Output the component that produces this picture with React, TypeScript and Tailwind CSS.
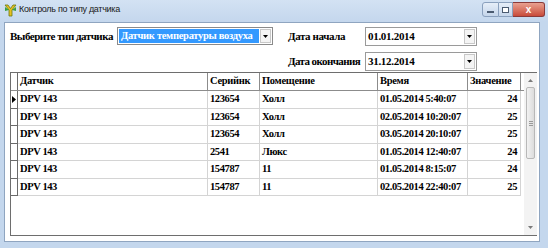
import React from "react";

const serif = { fontFamily: '"Liberation Serif", "Times New Roman", serif' };

const cols = [
  { title: "Датчик", w: "w-[190px]", align: "text-left" },
  { title: "Серийнк", w: "w-[52px]", align: "text-left" },
  { title: "Помещение", w: "w-[118px]", align: "text-left" },
  { title: "Время", w: "w-[90px]", align: "text-left" },
  { title: "Значение", w: "w-[53px]", align: "text-right" },
];

const rows = [
  ["DPV 143", "123654", "Холл", "01.05.2014 5:40:07", "24"],
  ["DPV 143", "123654", "Холл", "02.05.2014 10:20:07", "25"],
  ["DPV 143", "123654", "Холл", "03.05.2014 20:10:07", "25"],
  ["DPV 143", "2541", "Люкс", "01.05.2014 12:40:07", "24"],
  ["DPV 143", "154787", "11", "01.05.2014 8:15:07", "24"],
  ["DPV 143", "154787", "11", "02.05.2014 22:40:07", "25"],
];

function DropArrow() {
  return (
    <svg width="5" height="3" viewBox="0 0 5 3">
      <path d="M0 0H5L2.5 3Z" fill="#000" />
    </svg>
  );
}

function DateBox({ value }: { value: string }) {
  return (
    <div className="flex h-[19px] w-[112px] items-center border border-[#9a9a9a] bg-white">
      <span className="flex-1 whitespace-nowrap pl-[2px] text-[11px] font-bold leading-none tracking-[-0.3px] text-black">{value}</span>
      <div className="mr-[1px] flex h-[15px] w-[11px] items-center justify-center border border-[#c8c8c8] bg-[#f4f4f4]">
        <DropArrow />
      </div>
    </div>
  );
}

export default function App() {
  return (
    <div className="h-[248px] w-[548px] overflow-hidden bg-[#c4d7ed]" style={serif}>
      {/* title bar */}
      <div className="flex h-[22px] items-start bg-gradient-to-b from-[#d3e2f3] to-[#c4d7ed]">
        <svg className="ml-[4px] mt-[4px]" width="13" height="13" viewBox="0 0 13 13">
          <path d="M1 1L5 6V12H8V6L12 1H9L6.5 4.5L4 1Z" fill="#e8c020" stroke="#6a7a10" strokeWidth="0.8" />
          <path d="M5 6L1 3V7Z" fill="#3aa040" />
          <path d="M8 6L12 3V7Z" fill="#3aa040" />
        </svg>
        <span
          className="ml-[2px] mt-[5px] whitespace-nowrap text-[9px] leading-none tracking-[-0.3px] text-[#1a1a1a]"
          style={{ fontFamily: '"Liberation Sans", Arial, sans-serif' }}
        >
          Контроль по типу датчика
        </span>
        <div className="ml-auto mr-[3px] mt-[2px] flex">
          <div className="flex h-[15px] w-[17px] items-center justify-center rounded-l-[3px] border border-[#8aa0bd] bg-gradient-to-b from-[#e6eef8] to-[#c5d5ea]">
            <div className="mt-[5px] h-[2px] w-[7px] border border-[#4a5a70] bg-white" />
          </div>
          <div className="flex h-[15px] w-[14px] items-center justify-center border-y border-r border-[#8aa0bd] bg-gradient-to-b from-[#e6eef8] to-[#c5d5ea]">
            <div className="h-[6px] w-[7px] border border-[#4a5a70] bg-white" />
          </div>
          <div className="flex h-[15px] w-[32px] items-center justify-center rounded-r-[3px] border-y border-r border-[#8a3a3a] bg-gradient-to-b from-[#e8a090] to-[#c84a3a]">
            <span className="text-[10px] font-bold leading-none text-white" style={{ fontFamily: '"Liberation Sans", Arial, sans-serif' }}>
              x
            </span>
          </div>
        </div>
      </div>

      {/* client */}
      <div className="ml-[4px] flex h-[220px] w-[536px] flex-col border border-[#8fa5c0] bg-white">
        <div className="flex pt-[4px]">
          <div className="ml-[5px] flex h-[19px] w-[107px] items-center">
            <span className="whitespace-nowrap text-[11px] font-bold leading-none tracking-[-0.5px]">Выберите тип датчика</span>
          </div>
          <div className="flex h-[18px] w-[156px] items-center border border-[#8a8a8a] bg-white">
            <span className="ml-[1px] flex h-[14px] w-[140px] items-center whitespace-nowrap bg-[#3399ff] pl-[2px] text-[10.5px] font-bold leading-none tracking-[-0.3px] text-white">
              Датчик температуры воздуха
            </span>
            <div className="ml-auto mr-[1px] flex h-[14px] w-[11px] items-center justify-center border border-[#c8c8c8] bg-[#f4f4f4]">
              <DropArrow />
            </div>
          </div>
          <div className="ml-[15px] grid grid-cols-[77px_112px] gap-y-[6px]">
            <div className="flex items-center whitespace-nowrap text-[11px] font-bold leading-none tracking-[-0.4px]">Дата начала</div>
            <DateBox value="01.01.2014" />
            <div className="flex items-center whitespace-nowrap text-[11px] font-bold leading-none tracking-[-0.6px]">Дата окончания</div>
            <DateBox value="31.12.2014" />
          </div>
        </div>

        {/* grid */}
        <div className="ml-[5px] mt-[1px] flex h-[164px] w-[527px] border border-r-0 border-[#6e6e6e]">
          <div className="flex-1">
            <div className="flex h-[18px] border-b border-[#8c8c8c]">
              <div className="w-[7px] border-r border-[#6a6a6a]" />
              {cols.map((c) => (
                <div
                  key={c.title}
                  className={`${c.w} flex items-center whitespace-nowrap border-r border-[#8c8c8c] px-[2px] text-[10.5px] font-bold leading-none tracking-[-0.3px]`}
                >
                  {c.title}
                </div>
              ))}
            </div>
            {rows.map((r, i) => (
              <div key={i} className="flex h-[17.5px]">
                <div className="flex w-[7px] items-center border-b border-r border-[#6a6a6a]">
                  {i === 0 && (
                    <svg width="4" height="7" viewBox="0 0 4 7" className="ml-[1px]">
                      <path d="M0 0L4 3.5L0 7Z" fill="#000" />
                    </svg>
                  )}
                </div>
                {r.map((v, j) => (
                  <div
                    key={j}
                    className={`${cols[j].w} ${cols[j].align} flex items-center whitespace-nowrap border-b border-r border-[#d4d4d4] ${
                      j === 4 ? "justify-end pr-[3px]" : "pl-[2px]"
                    } text-[10.5px] font-bold leading-none tracking-[-0.4px]`}
                  >
                    {v}
                  </div>
                ))}
              </div>
            ))}
          </div>
          {/* scrollbar */}
          <div className="flex w-[13px] flex-col items-center bg-[#f3f3f3]">
            <svg width="5" height="3" viewBox="0 0 5 3" className="mt-[6px]">
              <path d="M0 3H5L2.5 0Z" fill="#7a7a7a" />
            </svg>
            <div className="mt-[5px] flex h-[72px] w-[9px] items-center justify-center rounded-[2px] border border-[#b8b8b8] bg-gradient-to-r from-[#f2f2f2] to-[#dcdcdc]">
              <div className="flex flex-col gap-[1px]">
                <div className="h-px w-[4px] bg-[#9a9a9a]" />
                <div className="h-px w-[4px] bg-[#9a9a9a]" />
                <div className="h-px w-[4px] bg-[#9a9a9a]" />
              </div>
            </div>
            <svg width="5" height="3" viewBox="0 0 5 3" className="mb-[6px] mt-auto">
              <path d="M0 0H5L2.5 3Z" fill="#7a7a7a" />
            </svg>
          </div>
        </div>
      </div>
    </div>
  );
}
